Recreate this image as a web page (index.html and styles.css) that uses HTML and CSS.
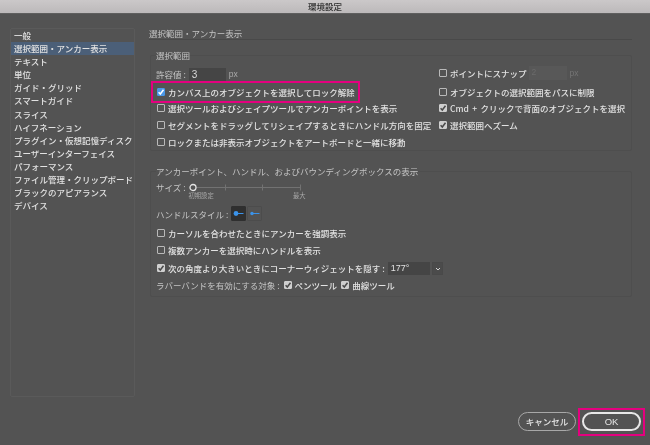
FILE: index.html
```html
<!DOCTYPE html>
<html lang="ja">
<head>
<meta charset="utf-8">
<title>環境設定</title>
<link rel="stylesheet" href="styles.css">
</head>
<body>
<div class="window">
    <div class="titlebar">環境設定</div>

    <div class="main">
        <ul class="sidebar">
            <li>一般</li>
            <li class="selected">選択範囲・アンカー表示</li>
            <li>テキスト</li>
            <li>単位</li>
            <li>ガイド・グリッド</li>
            <li>スマートガイド</li>
            <li>スライス</li>
            <li>ハイフネーション</li>
            <li>プラグイン・仮想記憶ディスク</li>
            <li>ユーザーインターフェイス</li>
            <li>パフォーマンス</li>
            <li>ファイル管理・クリップボード</li>
            <li>ブラックのアピアランス</li>
            <li>デバイス</li>
        </ul>

        <div class="content">
            <h1 class="heading">選択範囲・アンカー表示</h1>

            <fieldset class="panel panel-selection">
                <legend>選択範囲</legend>
                <div class="columns">
                    <div class="col-left">
                        <div class="row row-first">
                            <span class="label">許容値 :</span>
                            <span class="field field-tolerance">3</span>
                            <span class="unit">px</span>
                        </div>
                        <div class="row">
                            <label class="check marked">
                                <span class="box focus"><svg viewBox="0 0 8 8"><path d="M1.6 4.2 3.3 6 6.5 1.8"/></svg></span>
                                カンバス上のオブジェクトを選択してロック解除
                            </label>
                        </div>
                        <div class="row"><label class="check"><span class="box"></span>選択ツールおよびシェイプツールでアンカーポイントを表示</label></div>
                        <div class="row"><label class="check"><span class="box"></span>セグメントをドラッグしてリシェイプするときにハンドル方向を固定</label></div>
                        <div class="row"><label class="check"><span class="box"></span>ロックまたは非表示オブジェクトをアートボードと一緒に移動</label></div>
                    </div>
                    <div class="col-right">
                        <div class="row row-first">
                            <label class="check"><span class="box"></span>ポイントにスナップ</label>
                            <span class="field field-snap">2</span>
                            <span class="unit unit-off">px</span>
                        </div>
                        <div class="row"><label class="check"><span class="box"></span>オブジェクトの選択範囲をパスに制限</label></div>
                        <div class="row"><label class="check"><span class="box on"><svg viewBox="0 0 8 8"><path d="M1.6 4.2 3.3 6 6.5 1.8"/></svg></span><span><span class="latin">Cmd + </span>クリックで背面のオブジェクトを選択</span></label></div>
                        <div class="row"><label class="check"><span class="box on"><svg viewBox="0 0 8 8"><path d="M1.6 4.2 3.3 6 6.5 1.8"/></svg></span>選択範囲へズーム</label></div>
                    </div>
                </div>
            </fieldset>

            <fieldset class="panel panel-anchor">
                <legend>アンカーポイント、ハンドル、およびバウンディングボックスの表示</legend>

                <div class="size-row">
                    <span class="label">サイズ :</span>
                    <div class="slider">
                        <svg class="slider-track" viewBox="0 0 118 9" width="118" height="9">
                            <path class="track" d="M7 4.5H112M36.5 1.5V7.5M73.5 1.5V7.5M111.5 1.5V7.5"/>
                            <circle class="thumb" cx="4" cy="4.5" r="3"/>
                        </svg>
                        <div class="slider-labels"><span>初期設定</span><span>最大</span></div>
                    </div>
                </div>

                <div class="handle-row">
                    <span class="label">ハンドルスタイル :</span>
                    <span class="handle handle-on"><svg viewBox="0 0 15 15"><circle cx="5" cy="7.5" r="2.4"/><path d="M5 7.5H12.5"/></svg></span>
                    <span class="handle"><svg viewBox="0 0 15 15"><circle cx="5" cy="7.5" r="1.7"/><path d="M5 7.5H12.5"/></svg></span>
                </div>

                <div class="row row-cursor"><label class="check"><span class="box"></span>カーソルを合わせたときにアンカーを強調表示</label></div>
                <div class="row row-multi"><label class="check"><span class="box"></span>複数アンカーを選択時にハンドルを表示</label></div>

                <div class="row row-angle">
                    <label class="check"><span class="box on"><svg viewBox="0 0 8 8"><path d="M1.6 4.2 3.3 6 6.5 1.8"/></svg></span>次の角度より大きいときにコーナーウィジェットを隠す :</label>
                    <span class="field field-angle">177°</span>
                    <span class="chevron"><svg viewBox="0 0 10 12"><path d="M3 5 5 7 7 5"/></svg></span>
                </div>

                <div class="row row-rubber">
                    <span class="label">ラバーバンドを有効にする対象 :</span>
                    <label class="check"><span class="box on"><svg viewBox="0 0 8 8"><path d="M1.6 4.2 3.3 6 6.5 1.8"/></svg></span>ペンツール</label>
                    <label class="check"><span class="box on"><svg viewBox="0 0 8 8"><path d="M1.6 4.2 3.3 6 6.5 1.8"/></svg></span>曲線ツール</label>
                </div>
            </fieldset>
        </div>
    </div>

    <div class="footer">
        <button class="btn">キャンセル</button>
        <span class="ok-mark"><button class="btn btn-ok">OK</button></span>
    </div>
</div>
</body>
</html>
```

FILE: styles.css
```css
* {
    box-sizing: border-box;
}

html, body {
    margin: 0;
    height: 100%;
    background: #535353;
    overflow: hidden;
}

.window {
    width: 650px;
    height: 445px;
    display: flex;
    flex-direction: column;
    font-family: "Noto Sans CJK JP", "Liberation Sans", sans-serif;
    font-size: 8.5px;
    font-weight: 500;
    line-height: 12px;
    color: #e2e2e2;
    filter: blur(0.3px);
}

.titlebar {
    height: 14px;
    flex: none;
    text-align: center;
    line-height: 13px;
    color: #2f2f2f;
    background: linear-gradient(#cbc8c9, #bcb9ba);
    border-bottom: 1px solid #5f5f5f;
}

.main {
    height: 383px;
    flex: none;
    display: flex;
    gap: 14px;
    padding-top: 14px;
    padding-left: 10px;
}

.sidebar {
    width: 125px;
    height: 369px;
    margin: 0;
    padding: 0;
    list-style: none;
    border: 1px solid #5a5a5a;
    border-radius: 2px;
}

.sidebar li {
    height: 13.1px;
    line-height: 13px;
    padding-left: 3px;
    white-space: nowrap;
}

.sidebar .selected {
    background: #4b5f78;
}

.content {
    width: 483px;
    height: 369px;
}

.heading {
    margin: 0;
    height: 12px;
    font-size: 8.5px;
    font-weight: 400;
    color: #c4c4c4;
    line-height: 11px;
    border-bottom: 1px solid #494949;
}

.panel {
    margin: 9px 0 0 1px;
    padding: 0 0 0 5px;
    min-width: 0;
    border: 1px solid #4e4e4e;
    border-radius: 2px;
}

.panel legend {
    padding: 0;
    margin-left: 0;
    color: #c4c4c4;
    font-weight: 400;
}

.panel-selection {
    height: 102px;
}

.panel-anchor {
    height: 132px;
    margin-top: 14px;
}

.columns {
    display: flex;
    padding-top: 4px;
}

.col-left {
    width: 282px;
    flex: none;
}

.col-right {
    flex: 1;
}

.row {
    height: 16.6px;
    display: flex;
    align-items: center;
    white-space: nowrap;
}

.row-first {
    height: 18.5px;
}

.col-right .row-first {
    margin-top: -1px;
    margin-bottom: 1px;
}

.label {
    color: #c4c4c4;
    font-weight: 400;
}

.check {
    display: inline-flex;
    align-items: center;
    gap: 3px;
    color: #e2e2e2;
}

.latin {
    word-spacing: 1.5px;
}

.marked {
    outline: 2px solid #e4007f;
    outline-offset: 3px;
}

.box {
    width: 8px;
    height: 8px;
    flex: none;
    margin-left: 1px;
    border: 1px solid #b9b9b9;
    border-radius: 1px;
    display: block;
}

.box svg {
    display: block;
    width: 8px;
    height: 8px;
    margin: -1px;
    fill: none;
    stroke: #4a4a4a;
    stroke-width: 1.5;
}

.box.on {
    background: #cfcfcf;
    border-color: #cfcfcf;
}

.box.focus {
    background: #4a97e6;
    border-color: #4a97e6;
}

.box.focus svg {
    stroke: #fff;
}

.field {
    height: 13px;
    line-height: 13px;
    padding-left: 3px;
    background: #454545;
}

.field-tolerance {
    width: 37px;
    margin-left: 3px;
    font-size: 10px;
    color: #d8d8d8;
    font-family: "Liberation Sans", sans-serif;
}

.field-snap {
    width: 38px;
    height: 14px;
    margin-left: 2px;
    background: #585858;
    color: #6b6b6b;
    font-family: "Liberation Sans", sans-serif;
}

.unit {
    margin-left: 3px;
    color: #aaa;
    font-family: "Liberation Sans", sans-serif;
}

.unit-off {
    color: #747474;
}

.size-row {
    height: 19px;
    margin-top: 3px;
    display: flex;
    align-items: flex-start;
    padding-top: 1px;
}

.slider {
    width: 118px;
    margin-left: 3px;
}

.slider-track {
    display: block;
    margin-top: 2px;
}

.track {
    fill: none;
    stroke: #727272;
    stroke-width: 1;
}

.thumb {
    fill: none;
    stroke: #e4e4e4;
    stroke-width: 1.3;
}

.slider-labels {
    display: flex;
    justify-content: space-between;
    width: 117px;
    font-size: 6.3px;
    font-weight: 400;
    line-height: 8px;
    color: #a8a8a8;
}

.handle-row {
    height: 17px;
    margin-top: 6px;
    display: flex;
    align-items: center;
}

.handle {
    width: 15px;
    height: 15px;
    margin-left: 1px;
    border: 1px solid #4c4c4c;
    border-radius: 1px;
}

.handle-row .label + .handle {
    margin-left: 3px;
}

.handle svg {
    display: block;
    width: 15px;
    height: 15px;
    margin: -1px;
}

.handle circle {
    fill: #3b93ea;
}

.handle path {
    stroke: #3b93ea;
    stroke-width: 1;
}

.handle-on {
    background: #2f2f2f;
    border-color: #2f2f2f;
}

.row-cursor {
    margin-top: 3px;
}

.row-multi {
    margin-top: 0;
}

.row-angle {
    margin-top: 1px;
    height: 18px;
}

.field-angle {
    width: 42px;
    margin-left: 3px;
    font-family: "Liberation Sans", sans-serif;
    font-size: 9px;
}

.chevron {
    width: 11px;
    height: 13px;
    margin-left: 2px;
    background: #4b4b4b;
    border: 1px solid #494949;
}

.chevron svg {
    display: block;
    width: 10px;
    height: 12px;
    fill: none;
    stroke: #d5d5d5;
    stroke-width: 1;
}

.row-rubber {
    margin-top: -1px;
    height: 18px;
    gap: 3px;
}

.footer {
    flex: 1;
    display: flex;
    justify-content: flex-end;
    align-items: flex-start;
    gap: 2px;
    padding: 11px 5px 0 0;
}

.btn {
    height: 19px;
    padding: 0;
    margin-top: 4px;
    font: inherit;
    line-height: 15px;
    color: #e6e6e6;
    background: transparent;
    border: 1px solid #a8a8a8;
    border-radius: 10px;
    width: 58px;
}

.ok-mark {
    display: block;
    width: 67px;
    height: 28px;
    padding-left: 2px;
    border: 2px solid #e4007f;
}

.btn-ok {
    width: 59px;
    margin-top: 2px;
    border: 2px solid #e8e8e8;
    font-family: "Liberation Sans", sans-serif;
    font-size: 9.5px;
}
```
